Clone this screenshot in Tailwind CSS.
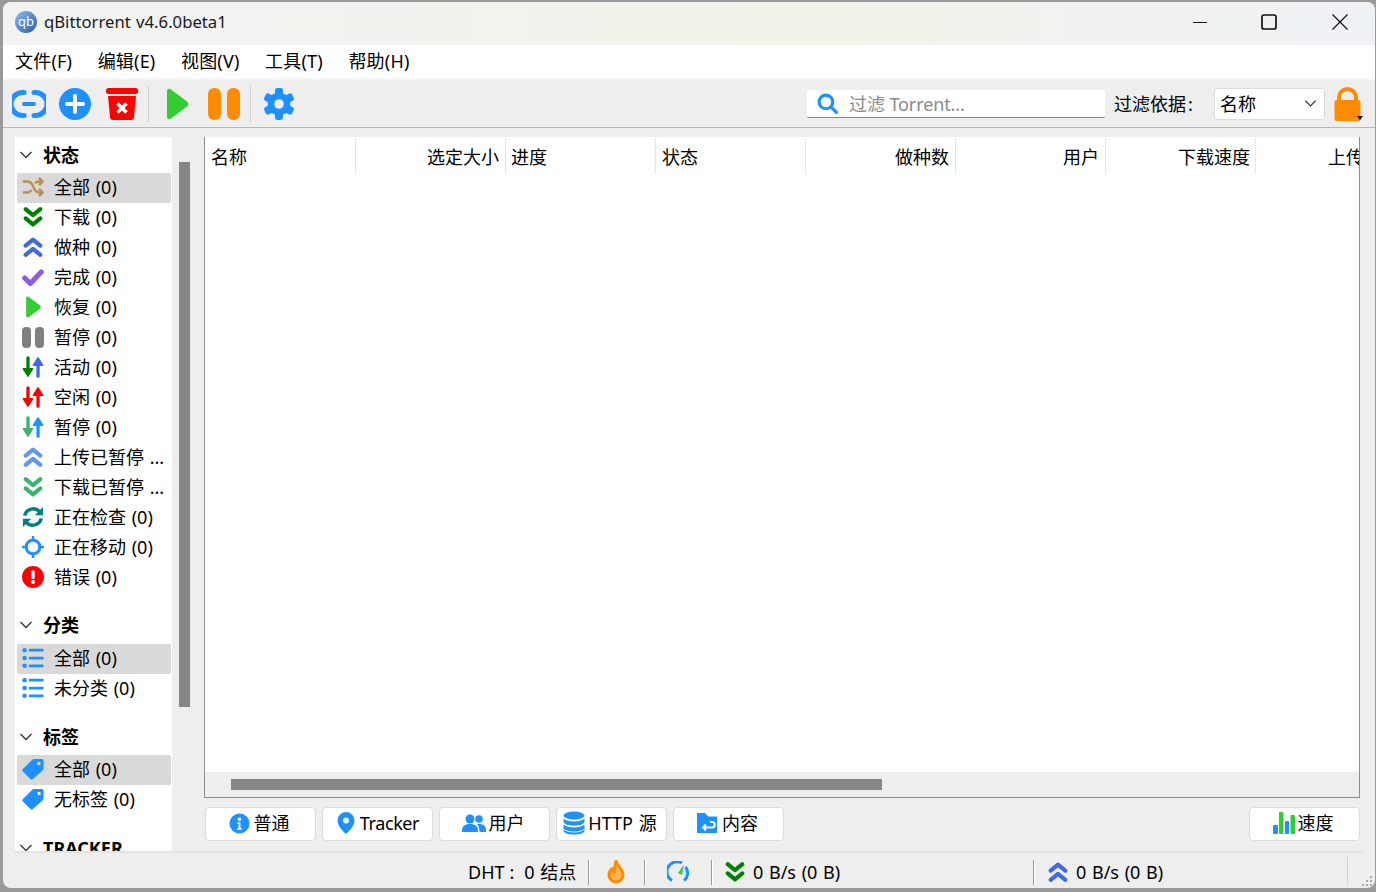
<!DOCTYPE html>
<html lang="zh">
<head>
  <meta charset="UTF-8">
  <title>qBittorrent v4.6.0beta1</title>
  <script src="https://cdn.jsdelivr.net/npm/@tailwindcss/browser@4"></script>
</head>
<body class="overflow-hidden bg-[#9a9a9a] text-[18px] text-black [word-spacing:1px]" style="font-family: 'Noto Sans', 'Noto Sans CJK SC', sans-serif;">

  <!-- shared icons -->
  <svg class="hidden">
    <symbol id="i-down" viewBox="0 0 24 24"><path d="M4 3.500l8 6.500 8-6.500M4 13.500l8 6.500 8-6.500" fill="none" stroke="currentColor" stroke-width="4.600" stroke-linecap="round" stroke-linejoin="round"/></symbol>
    <symbol id="i-up" viewBox="0 0 24 24"><path d="M4 10.500l8-6.500 8 6.500M4 20.500l8-6.500 8 6.500" fill="none" stroke="currentColor" stroke-width="4.600" stroke-linecap="round" stroke-linejoin="round"/></symbol>
    <symbol id="i-updown" viewBox="0 0 24 24">
      <path d="M6.500 2v12" stroke="var(--a)" stroke-width="3.600" stroke-linecap="round"/>
      <path d="M1.500 14h10l-5 8z" fill="var(--a)" stroke="var(--a)" stroke-width="1.600" stroke-linejoin="round"/>
      <path d="M17.500 22V10" stroke="var(--b)" stroke-width="3.600" stroke-linecap="round"/>
      <path d="M12.500 10h10l-5-8z" fill="var(--b)" stroke="var(--b)" stroke-width="1.600" stroke-linejoin="round"/>
    </symbol>
    <symbol id="i-list" viewBox="0 0 24 24" fill="#1e90ff">
      <circle cx="2.800" cy="3.500" r="2.500"/><circle cx="2.800" cy="12" r="2.500"/><circle cx="2.800" cy="20.500" r="2.500"/>
      <rect x="7.500" y="2" width="16" height="3" rx=".6"/><rect x="7.500" y="10.500" width="16" height="3" rx=".6"/><rect x="7.500" y="19" width="16" height="3" rx=".6"/>
    </symbol>
    <symbol id="i-tag" viewBox="0 0 24 24"><path fill-rule="evenodd" fill="#1e90ff" d="M13 1h8.500a2 2 0 0 1 2 2v8.500a2.500 2.500 0 0 1-.8 1.800L12 23a2 2 0 0 1-2.800 0L1 14.800a2 2 0 0 1 0-2.800L11.200 1.800A2.500 2.500 0 0 1 13 1zM18.500 4a1.900 1.900 0 1 0 0 3.800 1.900 1.900 0 0 0 0-3.800z"/></symbol>
    <symbol id="i-chev" viewBox="0 0 14 14"><path d="M1.500 4l5.500 5.500L12.500 4" fill="none" stroke="#333" stroke-width="1.300"/></symbol>
    <symbol id="i-play" viewBox="0 0 24 32"><path d="M2 3.500c0-2.500 2-3.400 4-2l16 12c1.800 1.300 1.800 3.700 0 5l-16 12c-2 1.400-4 .5-4-2z" fill="#32cd32"/></symbol>
  </svg>

  <div class="w-[1376px] h-[892px] pl-[3px] pt-[2px] pr-[1px] pb-[4px]">
    <div class="h-full flex flex-col rounded-[8px] overflow-hidden bg-[#eeeeee]">

      <!-- title bar -->
      <div class="h-[43px] shrink-0 flex items-center pb-[4px] bg-gradient-to-r from-[#f2f2f2] via-[#f1f3e8] via-60% to-[#eef2f6]">
        <div class="ml-[12px] w-[22px] h-[22px] rounded-full bg-gradient-to-br from-[#8fb8ea] to-[#2a5fae] flex items-center justify-center text-[13px] text-white leading-none">qb</div>
        <span class="ml-[7px] text-[16.7px] text-[#1a1a1a]">qBittorrent v4.6.0beta1</span>
        <div class="ml-auto flex items-center">
          <svg class="w-[16px] h-[16px] mr-[53px]" viewBox="0 0 16 16"><path d="M1 8.500h14" stroke="#111" stroke-width="1.200"/></svg>
          <svg class="w-[16px] h-[16px] mr-[55px]" viewBox="0 0 16 16"><rect x="1" y="1" width="14" height="14" rx="2" fill="none" stroke="#111" stroke-width="1.700"/></svg>
          <svg class="w-[16px] h-[16px] mr-[27px]" viewBox="0 0 16 16"><path d="M.5.500l15 15M15.500.500l-15 15" stroke="#111" stroke-width="1.200"/></svg>
        </div>
      </div>

      <!-- menu -->
      <div class="h-[33px] shrink-0 bg-white flex items-center pl-[12px] gap-[25.500px] tracking-[.2px]">
        <span>文件(F)</span><span>编辑(E)</span><span>视图(V)</span><span>工具(T)</span><span>帮助(H)</span>
      </div>

      <!-- toolbar -->
      <div class="h-[50px] shrink-0 flex items-center border-t-2 border-t-[#f6f6f6] border-b border-b-[#b9b9b9] pl-[9px]">
        <svg class="w-[34px] h-[30px]" viewBox="0 0 34 30"><path d="M12 3.500H10.500A11 11 0 0 0 10.500 26.500H12M22 3.500H23.500A11 11 0 0 1 23.500 26.500H22" fill="none" stroke="#1e90ff" stroke-width="5" stroke-linecap="round"/><path d="M12 15h10" stroke="#1e90ff" stroke-width="4" stroke-linecap="round"/></svg>
        <svg class="ml-[13px] w-[32px] h-[32px]" viewBox="0 0 32 32"><circle cx="16" cy="16" r="16" fill="#1e90ff"/><path d="M16 8v16M8 16h16" stroke="#fff" stroke-width="4" stroke-linecap="round"/></svg>
        <svg class="ml-[15px] w-[32px] h-[32px]" viewBox="0 0 32 32"><rect x="0" y="0" width="32" height="6" rx="2.500" fill="#f00"/><path d="M2 8h28l-2 21a3 3 0 0 1-3 3H7a3 3 0 0 1-3-3z" fill="#f00"/><path d="M11.500 15.500l9 9M20.500 15.500l-9 9" stroke="#fff" stroke-width="3.500"/></svg>
        <div class="ml-[10px] w-px h-[36px] bg-[#cfcfcf]"></div>
        <svg class="ml-[15px] w-[26px] h-[32px]"><use href="#i-play"/></svg>
        <div class="ml-[18px] w-[13px] h-[32px] rounded-[6px] bg-[#ff8c00]"></div>
        <div class="ml-[6px] w-[13px] h-[32px] rounded-[6px] bg-[#ff8c00]"></div>
        <div class="ml-[10px] w-px h-[36px] bg-[#cfcfcf]"></div>
        <svg class="ml-[12px] w-[32px] h-[32px]" viewBox="0 0 24 24">
          <g fill="#1e90ff">
            <rect x="9" y="0" width="6" height="24" rx="1.800"/>
            <rect x="9" y="0" width="6" height="24" rx="1.800" transform="rotate(60 12 12)"/>
            <rect x="9" y="0" width="6" height="24" rx="1.800" transform="rotate(120 12 12)"/>
            <circle cx="12" cy="12" r="8.500"/>
          </g>
          <circle cx="12" cy="12" r="3.600" fill="#eeeeee"/>
        </svg>

        <div class="ml-[512px] w-[298px] h-[28px] bg-white border-b border-b-[#868686] rounded-[2px] flex items-center pl-[10px]">
          <svg class="w-[21px] h-[21px]" viewBox="0 0 20 20"><circle cx="8.500" cy="8.500" r="6.500" fill="none" stroke="#1e90ff" stroke-width="3"/><path d="M13.500 13.500l5 5" stroke="#1e90ff" stroke-width="3" stroke-linecap="round"/></svg>
          <span class="ml-[11px] pt-[2px] text-[#8a8a8a] [word-spacing:0] tracking-[-.1px]">过滤 Torrent...</span>
        </div>
        <span class="ml-[9px] w-[100px] pt-[2px]">过滤依据<span class="ml-[2px]">:</span></span>
        <div class="w-[111px] h-[32px] bg-white border border-[#dcdcdc] rounded-[3px] flex items-center pl-[5px] pr-[7px]">
          <span class="pt-[2px]">名称</span>
          <svg class="ml-auto w-[13px] h-[13px]"><use href="#i-chev"/></svg>
        </div>
        <div class="relative ml-[8px] w-[29px] h-[34px]">
          <svg class="w-[29px] h-[34px]" viewBox="0 0 29 34"><path d="M6 15V10.500a8.500 8.500 0 0 1 17 0V15" fill="none" stroke="#ff8c00" stroke-width="4"/><rect x="1.500" y="13" width="26" height="21" rx="2" fill="#ff8c00"/></svg>
          <div class="absolute right-[-1px] bottom-[1px] border-x-[3px] border-x-transparent border-t-[4px] border-t-black"></div>
        </div>
      </div>

      <!-- main -->
      <div class="h-[723px] shrink-0 flex pt-[9px] pl-[12px]">
        <!-- side panel -->
        <div class="w-[157px] h-[714px] shrink-0 bg-white overflow-hidden pl-[2px] pr-[1px]">
          <div class="h-[36px] flex items-center font-bold"><svg class="ml-[2px] w-[14px] h-[14px]"><use href="#i-chev"/></svg><span class="ml-[10px]">状态</span></div>

          <div class="h-[30px] flex items-center pb-[2px] bg-[#d9d9d9] rounded-[2px] pl-[5px]">
            <svg class="w-[22px] h-[22px] text-[#b88f4f]" viewBox="0 0 24 24"><path d="M1 6h5c3 0 4.500 1.500 6 5l1 2c1.500 3.500 3 5 6 5h3M1 18h5c2 0 3.500-1 4.500-2.500M14 8c1-1.400 2.500-2 5-2h3M18.500 2l4 4-4 4M18.500 14l4 4-4 4" fill="none" stroke="currentColor" stroke-width="2.600"/></svg>
            <span class="ml-[10px]">全部 (0)</span>
          </div>
          <div class="h-[30px] flex items-center pb-[2px] pl-[5px]"><svg class="w-[22px] h-[22px] text-[#008000]"><use href="#i-down"/></svg><span class="ml-[10px]">下载 (0)</span></div>
          <div class="h-[30px] flex items-center pb-[2px] pl-[5px]"><svg class="w-[22px] h-[22px] text-[#4169e1]"><use href="#i-up"/></svg><span class="ml-[10px]">做种 (0)</span></div>
          <div class="h-[30px] flex items-center pb-[2px] pl-[5px]"><svg class="w-[22px] h-[22px]" viewBox="0 0 24 24"><path d="M3 13l6 6L21 6.500" fill="none" stroke="#8a5be0" stroke-width="5.500" stroke-linecap="round" stroke-linejoin="round"/></svg><span class="ml-[10px]">完成 (0)</span></div>
          <div class="h-[30px] flex items-center pb-[2px] pl-[5px]"><svg class="w-[22px] h-[22px]"><use href="#i-play"/></svg><span class="ml-[10px]">恢复 (0)</span></div>
          <div class="h-[30px] flex items-center pb-[2px] pl-[5px]"><div class="w-[22px] flex justify-between"><div class="w-[9px] h-[21px] rounded-[4px] bg-[#808080]"></div><div class="w-[9px] h-[21px] rounded-[4px] bg-[#808080]"></div></div><span class="ml-[10px]">暂停 (0)</span></div>
          <div class="h-[30px] flex items-center pb-[2px] pl-[5px]"><svg class="w-[22px] h-[22px] [--a:#008000] [--b:#4169e1]"><use href="#i-updown"/></svg><span class="ml-[10px]">活动 (0)</span></div>
          <div class="h-[30px] flex items-center pb-[2px] pl-[5px]"><svg class="w-[22px] h-[22px] [--a:#ff0000] [--b:#ff0000]"><use href="#i-updown"/></svg><span class="ml-[10px]">空闲 (0)</span></div>
          <div class="h-[30px] flex items-center pb-[2px] pl-[5px]"><svg class="w-[22px] h-[22px] [--a:#3cb371] [--b:#1e90ff]"><use href="#i-updown"/></svg><span class="ml-[10px]">暂停 (0)</span></div>
          <div class="h-[30px] flex items-center pb-[2px] pl-[5px]"><svg class="w-[22px] h-[22px] text-[#6495ed]"><use href="#i-up"/></svg><span class="ml-[10px]">上传已暂停 ...</span></div>
          <div class="h-[30px] flex items-center pb-[2px] pl-[5px]"><svg class="w-[22px] h-[22px] text-[#3cb371]"><use href="#i-down"/></svg><span class="ml-[10px]">下载已暂停 ...</span></div>
          <div class="h-[30px] flex items-center pb-[2px] pl-[5px]">
            <svg class="w-[22px] h-[22px]" viewBox="0 0 24 24"><path d="M3 10.500A9.500 9.500 0 0 1 19.500 6.500M21 13.500A9.500 9.500 0 0 1 4.500 17.500" fill="none" stroke="#008080" stroke-width="3.800"/><path d="M23 1v9h-9zM1 23v-9h9z" fill="#008080"/></svg>
            <span class="ml-[10px]">正在检查 (0)</span>
          </div>
          <div class="h-[30px] flex items-center pb-[2px] pl-[5px]">
            <svg class="w-[22px] h-[22px]" viewBox="0 0 24 24"><circle cx="12" cy="12" r="7.500" fill="none" stroke="#1e90ff" stroke-width="3.200"/><path d="M12 1v4M12 19v4M1 12h4M19 12h4" stroke="#1e90ff" stroke-width="2.800" stroke-linecap="round"/></svg>
            <span class="ml-[10px]">正在移动 (0)</span>
          </div>
          <div class="h-[30px] flex items-center pb-[2px] pl-[5px]">
            <svg class="w-[22px] h-[22px]" viewBox="0 0 22 22"><circle cx="11" cy="11" r="11" fill="#f00"/><rect x="9.300" y="4.500" width="3.400" height="8.500" rx="1" fill="#fff"/><circle cx="11" cy="16" r="1.900" fill="#fff"/></svg>
            <span class="ml-[10px]">错误 (0)</span>
          </div>

          <div class="mt-[15px] h-[36px] flex items-center pb-[2px] font-bold"><svg class="ml-[2px] w-[14px] h-[14px]"><use href="#i-chev"/></svg><span class="ml-[10px]">分类</span></div>
          <div class="h-[30px] flex items-center pb-[2px] bg-[#d9d9d9] rounded-[2px] pl-[5px]"><svg class="w-[22px] h-[22px]"><use href="#i-list"/></svg><span class="ml-[10px]">全部 (0)</span></div>
          <div class="h-[30px] flex items-center pb-[2px] pl-[5px]"><svg class="w-[22px] h-[22px]"><use href="#i-list"/></svg><span class="ml-[10px]">未分类 (0)</span></div>

          <div class="mt-[15px] h-[36px] flex items-center font-bold"><svg class="ml-[2px] w-[14px] h-[14px]"><use href="#i-chev"/></svg><span class="ml-[10px]">标签</span></div>
          <div class="h-[30px] flex items-center pb-[2px] bg-[#d9d9d9] rounded-[2px] pl-[5px]"><svg class="w-[22px] h-[22px]"><use href="#i-tag"/></svg><span class="ml-[10px]">全部 (0)</span></div>
          <div class="h-[30px] flex items-center pb-[2px] pl-[5px]"><svg class="w-[22px] h-[22px]"><use href="#i-tag"/></svg><span class="ml-[10px]">无标签 (0)</span></div>

          <div class="mt-[15px] h-[36px] flex items-center font-bold"><svg class="ml-[2px] w-[14px] h-[14px]"><use href="#i-chev"/></svg><span class="ml-[10px]">TRACKER</span></div>
        </div>

        <!-- side scrollbar -->
        <div class="w-[18px] shrink-0 pl-[7px] pt-[25px]"><div class="w-[11px] h-[545px] bg-[#868686]"></div></div>

        <!-- right column -->
        <div class="ml-[14px] w-[1156px] shrink-0">
          <div class="h-[661px] flex flex-col bg-white border-x border-b border-x-[#8c8c99] border-b-[#8c8c99] overflow-hidden">
            <div class="h-[36px] mt-[1px] shrink-0 flex whitespace-nowrap">
              <div class="w-[151px] shrink-0 border-r border-r-[#e6e6e6] pl-[6px] pt-[2px] flex items-center">名称</div>
              <div class="w-[150px] shrink-0 border-r border-r-[#e6e6e6] pr-[6px] pt-[2px] flex items-center justify-end">选定大小</div>
              <div class="w-[150px] shrink-0 border-r border-r-[#e6e6e6] pl-[5px] pt-[2px] flex items-center">进度</div>
              <div class="w-[150px] shrink-0 border-r border-r-[#e6e6e6] pl-[6px] pt-[2px] flex items-center">状态</div>
              <div class="w-[150px] shrink-0 border-r border-r-[#e6e6e6] pr-[6px] pt-[2px] flex items-center justify-end">做种数</div>
              <div class="w-[150px] shrink-0 border-r border-r-[#e6e6e6] pr-[6px] pt-[2px] flex items-center justify-end">用户</div>
              <div class="w-[150px] shrink-0 border-r border-r-[#e6e6e6] pr-[5px] pt-[2px] flex items-center justify-end">下载速度</div>
              <div class="w-[150px] shrink-0 pl-[72px] pt-[2px] flex items-center">上传速度</div>
            </div>
            <div class="flex-1"></div>
            <div class="h-[25px] shrink-0 bg-[#eeeeee] pl-[26px] pt-[7px]"><div class="w-[651px] h-[11px] bg-[#868686]"></div></div>
          </div>

          <div class="mt-[9px] pl-[1px] flex gap-[6px]">
            <div class="w-[111px] h-[34px] bg-white border border-[#dcdcdc] rounded-[4px] flex items-center justify-center gap-[4px] pr-[3px] pb-[2px]">
              <svg class="w-[21px] h-[21px]" viewBox="0 0 22 22"><circle cx="11" cy="11" r="10.500" fill="#1e90ff"/><circle cx="11" cy="6.500" r="1.800" fill="#fff"/><path d="M8.500 10h3.500v6h1.500v1.500h-5V16H10v-4.500H8.500z" fill="#fff"/></svg>
              <span>普通</span>
            </div>
            <div class="w-[111px] h-[34px] bg-white border border-[#dcdcdc] rounded-[4px] flex items-center justify-center gap-[4px] pb-[2px]">
              <svg class="w-[20px] h-[24px]" viewBox="0 0 20 24"><path fill="#1e90ff" fill-rule="evenodd" d="M10 1a8.500 8.500 0 0 1 8.500 8.500c0 5-5 10.500-8.500 13.500C6.500 20 1.500 14.500 1.500 9.500A8.500 8.500 0 0 1 10 1zm0 5.500a3 3 0 1 0 0 6 3 3 0 0 0 0-6z"/></svg>
              <span class="tracking-[-.4px]">Tracker</span>
            </div>
            <div class="w-[111px] h-[34px] bg-white border border-[#dcdcdc] rounded-[4px] flex items-center justify-center gap-[3px] pr-[3px] pb-[2px]">
              <svg class="w-[24px] h-[20px]" viewBox="0 0 24 20" fill="#1e90ff"><circle cx="8" cy="6" r="4.500"/><circle cx="17" cy="6" r="3.800"/><path d="M0 18c0-5 3-7 8-7s8 2 8 7v1H0zM17 11c4.500 0 7 2 7 6.500V19h-6.500c0-3-.5-5.500-2.500-7.800.6-.1 1.300-.2 2-.2z"/></svg>
              <span>用户</span>
            </div>
            <div class="w-[111px] h-[34px] bg-white border border-[#dcdcdc] rounded-[4px] flex items-center justify-center gap-[3px] pr-[3px] pb-[2px]">
              <svg class="w-[22px] h-[24px]" viewBox="0 0 22 24" fill="#1e90ff"><ellipse cx="11" cy="4.500" rx="10.500" ry="4"/><path d="M.5 7.500c2 2 6 3 10.500 3s8.500-1 10.500-3v3c0 2.500-4.500 4-10.500 4S.5 13 .5 10.500z"/><path d="M.5 13.500c2 2 6 3 10.500 3s8.500-1 10.500-3v6c0 2.500-4.500 4-10.500 4S.5 22 .5 19.500z"/><path d="M.5 18c2 2 6 3 10.500 3s8.500-1 10.500-3" stroke="#fff" fill="none"/></svg>
              <span>HTTP 源</span>
            </div>
            <div class="w-[111px] h-[34px] bg-white border border-[#dcdcdc] rounded-[4px] flex items-center justify-center gap-[4px] pr-[3px] pb-[2px]">
              <svg class="w-[22px] h-[22px]" viewBox="0 0 22 22"><path fill="#1e90ff" d="M1 1h8l3 3.500h9V21H1z"/><path d="M14 10h2.500a2.800 2.800 0 0 1 0 5.500H7M10 12.500l-3 3 3 3" fill="none" stroke="#fff" stroke-width="2"/></svg>
              <span>内容</span>
            </div>
            <div class="ml-auto w-[111px] h-[34px] bg-white border border-[#dcdcdc] rounded-[4px] flex items-center justify-center gap-[3px] pr-[3px] pb-[2px]">
              <svg class="w-[22px] h-[24px]" viewBox="0 0 22 24"><rect x="0" y="14" width="5" height="9" rx="1" fill="#1e90ff"/><rect x="6" y="1" width="4.500" height="22" rx="1" fill="#32cd32"/><rect x="12" y="10" width="4" height="13" rx="1" fill="#1e90ff"/><rect x="17.500" y="4" width="4.500" height="19" rx="1" fill="#32cd32"/></svg>
              <span>速度</span>
            </div>
          </div>
        </div>
      </div>

      <!-- status bar -->
      <div class="relative flex-1 flex items-center ml-[12px] mr-[12px] pt-[3px] border-t-2 border-t-[#e4e4e4] whitespace-nowrap">
        <span class="ml-[453px] w-[120px]">DHT<span class="ml-[5px]">:</span><span class="ml-[10px]">0 结点</span></span>
        <div class="w-[2px] h-[25px] bg-[#999] border-r border-r-white"></div>
        <svg class="ml-[16px] w-[20px] h-[24px]" viewBox="0 0 20 24"><path d="M10 1c1 5 7 7.500 7 14a7 7 0 0 1-14 0c0-3 1.500-5 3-6.500 0 2 1 3 2 3.500 1-3 1-7 2-11z" fill="#ffb257" stroke="#ff8c00" stroke-width="3" stroke-linejoin="round"/></svg>
        <div class="ml-[18px] w-[2px] h-[25px] bg-[#999] border-r border-r-white"></div>
        <svg class="ml-[21px] w-[22px] h-[22px]" viewBox="0 0 22 22"><path d="M5 19.500A9.500 9.500 0 0 1 15 2M18.500 6A9.500 9.500 0 0 1 17 19.500" fill="none" stroke="#1e90ff" stroke-width="3"/><path d="M17 3.500l-2 10.500-4-2z" fill="#32cd32"/></svg>
        <div class="ml-[22px] w-[2px] h-[25px] bg-[#999] border-r border-r-white"></div>
        <svg class="ml-[11px] w-[22px] h-[22px] text-[#008000]"><use href="#i-down"/></svg>
        <span class="ml-[7px] w-[280px]">0 B/s (0 B)</span>
        <div class="w-[2px] h-[25px] bg-[#999] border-r border-r-white"></div>
        <svg class="ml-[12px] w-[22px] h-[22px] text-[#4169e1]"><use href="#i-up"/></svg>
        <span class="ml-[7px]">0 B/s (0 B)</span>
        <div class="absolute left-[1332px] top-[4px] w-px h-[28px] bg-[#d0d0d0]"></div>
        <!-- size grip -->
        <svg class="absolute right-[-10px] bottom-[1px] w-[11px] h-[11px]" viewBox="0 0 11 11" fill="#a8a8a8"><rect x="8" y="0" width="2" height="2"/><rect x="4" y="4" width="2" height="2"/><rect x="8" y="4" width="2" height="2"/><rect x="0" y="8" width="2" height="2"/><rect x="4" y="8" width="2" height="2"/><rect x="8" y="8" width="2" height="2"/></svg>
      </div>
    </div>
  </div>
</body>
</html>
